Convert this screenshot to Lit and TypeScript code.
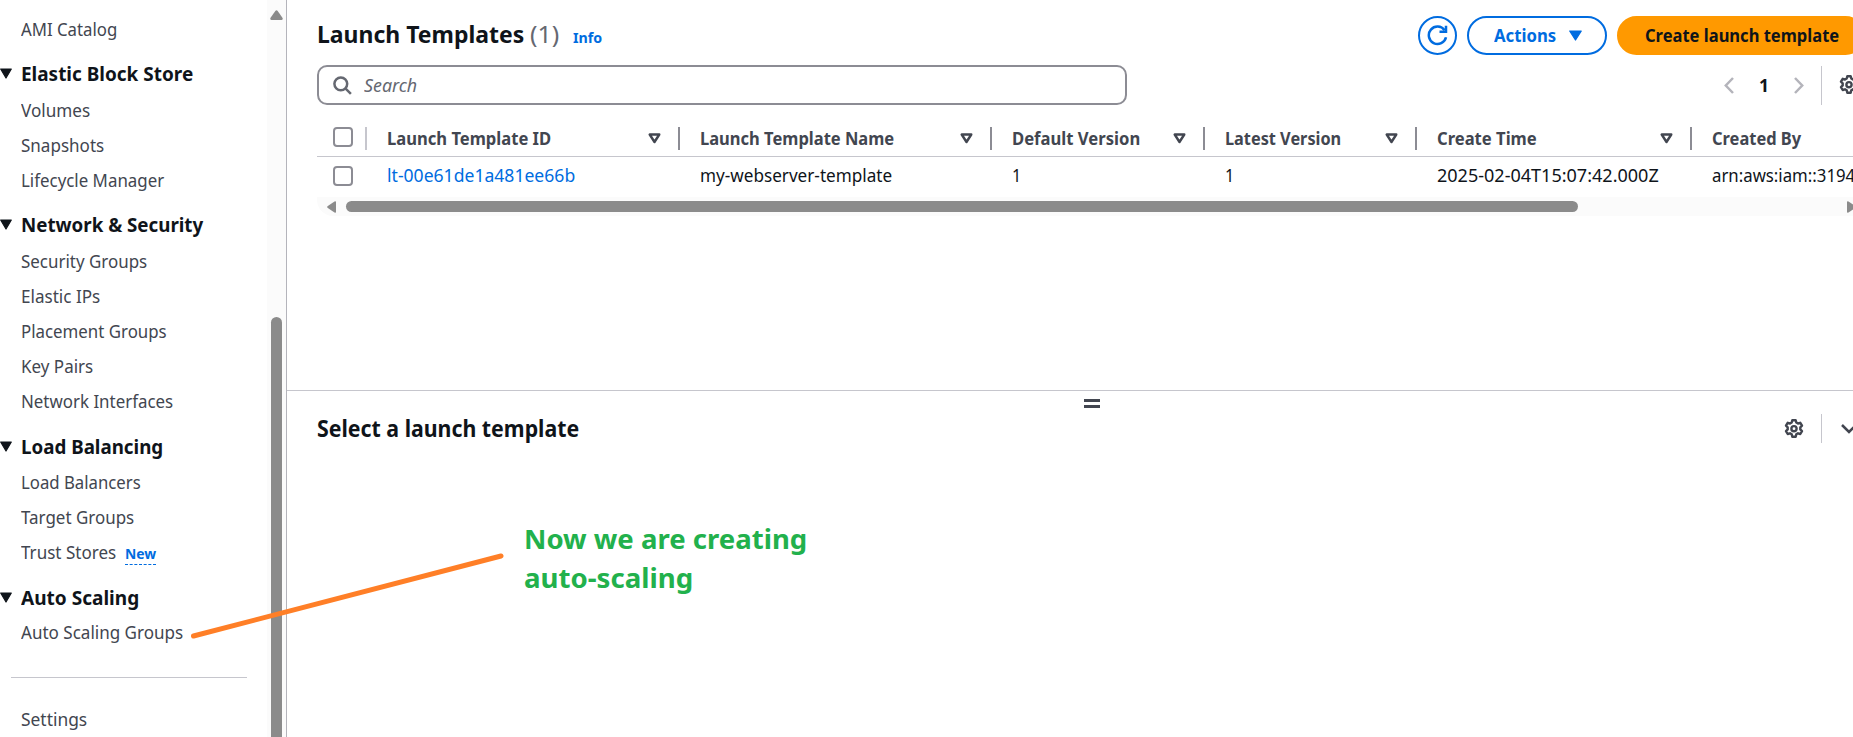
import { LitElement, html, css, svg } from "lit";
import { customElement, property } from "lit/decorators.js";

/* Single line of text condensed horizontally to a given width. */
@customElement("fit-text")
class FitText extends LitElement {
  static styles = css`
    :host { display: inline-block; white-space: nowrap; flex: none; }
    .t { display: inline-block; transform-origin: 0 50%; }
  `;
  @property({ type: Number }) w = 0;
  @property() text = "";
  render() {
    return html`<span class="t">${this.text}</span>`;
  }
  updated() {
    const t = this.renderRoot.querySelector(".t") as HTMLElement;
    const natural = t.getBoundingClientRect().width;
    if (!natural) return;
    t.style.transform = `scaleX(${(this.w + 1.2) / natural})`;
    t.style.marginRight = `${this.w + 1.2 - natural}px`;
  }
}

const t = (text: string, w: number) => html`<fit-text .text=${text} .w=${w}></fit-text>`;

const gear = svg`<path d="M8.300 1.200h3.400l.6 2.300 1.700 1 2.300-.7 1.700 2.900-1.700 1.700v2l1.700 1.700-1.700 2.900-2.300-.7-1.700 1-.6 2.500H8.300l-.6-2.500-1.700-1-2.300.7L2 12.100l1.700-1.700v-2L2 6.700l1.700-2.900 2.300.7 1.700-1z"/><circle cx="10" cy="9.700" r="2.600"/>`;

interface Section { title?: string; w?: number; items: [string, number, string?][]; }
const nav: Section[] = [
  { items: [["AMI Catalog", 95]] },
  { title: "Elastic Block Store", w: 171, items: [["Volumes", 68], ["Snapshots", 82], ["Lifecycle Manager", 142]] },
  { title: "Network & Security", w: 181, items: [["Security Groups", 125], ["Elastic IPs", 78], ["Placement Groups", 144.5], ["Key Pairs", 71], ["Network Interfaces", 151]] },
  { title: "Load Balancing", w: 141, items: [["Load Balancers", 118.5], ["Target Groups", 112], ["Trust Stores", 94, "New"]] },
  { title: "Auto Scaling", w: 117, items: [["Auto Scaling Groups", 161]] },
];

const columns: { head: string; hw: number; cell: string; cw: number; link?: boolean }[] = [
  { head: "Launch Template ID", hw: 163, cell: "lt-00e61de1a481ee66b", cw: 187, link: true },
  { head: "Launch Template Name", hw: 193, cell: "my-webserver-template", cw: 191 },
  { head: "Default Version", hw: 127, cell: "1", cw: 8 },
  { head: "Latest Version", hw: 115, cell: "1", cw: 8 },
  { head: "Create Time", hw: 98.5, cell: "2025-02-04T15:07:42.000Z", cw: 220.5 },
  { head: "Created By", hw: 88, cell: "arn:aws:iam::3194", cw: 142 },
];

@customElement("app-root")
class AppRoot extends LitElement {
  static styles = css`
    * { box-sizing: border-box; }
    :host {
      display: flex; position: relative; width: 1853px; height: 737px; overflow: hidden;
      background: #fff; color: #0f141a;
      font-family: "Noto Sans", "Open Sans", sans-serif; font-size: 17.5px;
    }
    svg { display: block; flex: none; }
    .side { width: 287px; height: 737px; display: flex; border-right: 1px solid #b4b4bb; flex: none; }
    .nav { width: 267px; padding-top: 12px; color: #424650; }
    .item { height: 35px; line-height: 35px; padding-left: 21px; display: flex; }
    .section { height: 46px; padding: 7px 0 0; line-height: 35px; display: flex; align-items: center; font-size: 19.5px; font-weight: 700; color: #0f141a; }
    .section svg { margin-right: 9px; }
    .group:nth-child(n + 4) .section { padding-top: 9px; }
    .group:nth-child(5) .section { height: 45px; }
    .new { margin-left: 9px; font-size: 15px; font-weight: 700; color: #006ce0; height: 22px; line-height: 21px; margin-top: 8px; border-bottom: 1px dashed #006ce0; width: 31px; }
    .rule { height: 1px; background: #c6c6cd; margin: 27px 20px 0 11px; }
    .settings { margin-top: 24px; }
    .vtrack { width: 19px; background: #fbfbfb; padding-top: 10px; display: flex; flex-direction: column; align-items: center; }
    .vthumb { width: 11px; margin-top: 297px; height: 440px; border-radius: 6px 6px 0 0; background: #8b8b8b; flex: none; }
    .main { flex: none; width: 1566px; height: 737px; display: flex; flex-direction: column; overflow: hidden; }
    .top { height: 390px; padding-left: 30px; flex: none; overflow: hidden; }
    .head { height: 65px; display: flex; padding-top: 16px; width: 1560px; }
    .title { width: 1101px; display: flex; align-items: baseline; height: 39px; line-height: 37px; font-size: 23.500px; font-weight: 700; }
    .count { font-weight: 400; color: #656871; margin-left: 6px; }
    .info { font-size: 15px; color: #006ce0; margin-left: 14px; }
    .btn { height: 39px; border: 2px solid #006ce0; border-radius: 20px; color: #006ce0; font-weight: 700; display: flex; align-items: center; flex: none; line-height: 34px; }
    .btn fit-text { margin-top: -1px; }
    .round { width: 39px; justify-content: center; }
    .actions { width: 140px; margin-left: 10px; padding-left: 25px; gap: 13px; }
    .create { margin-left: 10px; width: 248px; background: #f90; border-color: #f90; color: #0f141a; padding-left: 26px; }
    .tools { height: 40px; display: flex; width: 1560px; }
    .search { width: 810px; height: 40px; border: 2px solid #8c8c94; border-radius: 10px; display: flex; align-items: center; padding-left: 14px; font-style: italic; color: #656871; line-height: 34px; }
    .search fit-text { margin-left: 12px; margin-bottom: 1px; }
    .pager { margin-left: 597px; display: flex; align-items: center; font-weight: 700; }
    .one { margin: 0 25px 0 25px; }
    .vline { width: 1px; background: #c6c6cd; flex: none; }
    .pager .vline { height: 39px; margin: 0 17px 0 16.500px; }
    .row { display: grid; grid-template-columns: 50px 313px 312px 213px 212px 275px 200px; width: 1575px; align-items: center; }
    .hrow { height: 52px; padding-top: 15px; border-bottom: 1px solid #c6c6cd; color: #424650; font-weight: 700; }
    .drow { height: 39px; }
    .cell { display: flex; align-items: center; padding-left: 20px; height: 24px; line-height: 24px; }
    .drow .cell { padding-bottom: 2px; height: 24px; margin-top: -2px; }
    .hrow .cell { justify-content: space-between; padding-right: 17px; border-right: 2px solid #8c8c94; height: 23px; }
    .hrow .cell:last-child { border: 0; }
    .pick { padding-left: 16px; height: 23px; display: flex; align-items: center; }
    .hrow .pick { border-right: 2px solid #c6c6cd; }
    .box { width: 20px; height: 20px; border: 2px solid #8c8c94; border-radius: 4px; }
    .hrow .box { margin-top: -2px; }
    .drow .box { margin-top: -1px; }
    .link { color: #006ce0; }
    .htrack { height: 19px; background: #fbfbfb; border-radius: 0 0 0 16px; margin-top: 1px; display: flex; align-items: center; padding-left: 10px; width: 1536px; }
    .hthumb { width: 1232px; height: 11px; border-radius: 6px; background: #8b8b8b; margin: 0 269px 0 10px; flex: none; }
    .split { flex: 1; border-top: 1px solid #c6c6cd; padding-left: 30px; }
    .grip { width: 16px; height: 9px; border: solid #424650; border-width: 3px 0; margin: 8px 0 0 767px; }
    .panel { display: flex; height: 29px; margin-top: 6px; align-items: center; font-size: 23.500px; font-weight: 700; line-height: 29px; }
    .panel .gear { margin-left: 1204.500px; }
    .panel .vline { height: 29px; margin: 0 19px 0 17px; }
    .arrow { position: absolute; left: 0; top: 0; }
    .note { position: absolute; left: 524px; top: 519px; color: #22b14c; font-size: 27.500px; font-weight: 700; line-height: 39px; display: flex; flex-direction: column; }
  `;

  tri(fill: string, w = 12) {
    return html`<svg width=${w} height="11" viewBox="0 0 12 11" preserveAspectRatio="none"><path d="M.7 1h10.600L6 10z" fill=${fill} stroke=${fill} stroke-width="1.200" stroke-linejoin="round"/></svg>`;
  }
  gearIcon() {
    return html`<svg class="gear" width="20" height="20" viewBox="0 0 20 20" fill="none" stroke="#424650" stroke-width="2.400" stroke-linejoin="round">${gear}</svg>`;
  }

  render() {
    return html`
      <nav class="side">
        <div class="nav">
          ${nav.map((s) => html`<div class="group">
            ${s.title ? html`<div class="section">${this.tri("#0f141a")}${t(s.title, s.w!)}</div>` : ""}
            ${s.items.map(([n, w, b]) => html`<div class="item">${t(n, w)}${b ? html`<span class="new">${t(b, 30)}</span>` : ""}</div>`)}
          </div>`)}
          <div class="rule"></div>
          <div class="item settings">${t("Settings", 65)}</div>
        </div>
        <div class="vtrack">
          <svg width="13" height="10" viewBox="0 0 13 10"><path d="M5.300 1Q6.500-.6 7.700 1L12.600 8Q13 10 11.500 10h-10Q0 10 .4 8z" fill="#8b8b8b"/></svg>
          <div class="vthumb"></div>
        </div>
      </nav>
      <main class="main">
        <section class="top">
          <div class="head">
            <div class="title">${t("Launch Templates", 206)}<span class="count">${t("(1)", 28)}</span><span class="info">${t("Info", 28)}</span></div>
            <div class="btn round"><svg width="21" height="21" viewBox="0 0 21 21" fill="none" stroke="#006ce0" stroke-width="2.500"><path d="M19 12.200A8.700 8.700 0 1 1 17.600 5.200"/><path d="M19 .8v5.900h-6.500"/></svg></div>
            <div class="btn actions">${t("Actions", 61)}${this.tri("#006ce0", 13)}</div>
            <div class="btn create">${t("Create launch template", 193)}</div>
          </div>
          <div class="tools">
            <div class="search"><svg width="19" height="19" viewBox="0 0 19 19" fill="none" stroke="#656871" stroke-width="2.500"><circle cx="7.800" cy="7.800" r="6.400"/><path d="M12.400 12.400l5.500 5.500"/></svg>${t("Search", 52)}</div>
            <div class="pager">
              <svg width="10" height="17" viewBox="0 0 10 17" fill="none" stroke="#b4b4bb" stroke-width="2.500"><path d="M9 1L1.800 8.500 9 16"/></svg>
              <span class="one">${t("1", 8.8)}</span>
              <svg width="10" height="17" viewBox="0 0 10 17" fill="none" stroke="#b4b4bb" stroke-width="2.500"><path d="M1 1l7.200 7.500L1 16"/></svg>
              <div class="vline"></div>
              ${this.gearIcon()}
            </div>
          </div>
          <div class="row hrow">
            <div class="pick"><div class="box"></div></div>
            ${columns.map((c, i) => html`<div class="cell">${t(c.head, c.hw)}${i < 5 ? html`<svg width="13" height="11" viewBox="0 0 13 11"><path d="M1.700 1.500h9.600L6.500 9z" fill="none" stroke="#424650" stroke-width="2.400" stroke-linejoin="round"/></svg>` : ""}</div>`)}
          </div>
          <div class="row drow">
            <div class="pick"><div class="box"></div></div>
            ${columns.map((c) => html`<div class="cell ${c.link ? "link" : ""}">${t(c.cell, c.cw)}</div>`)}
          </div>
          <div class="htrack">
            <svg width="9" height="12" viewBox="0 0 9 12"><path d="M9 1v10q0 1-1.500.6L.8 7Q-.5 6 .8 5L7.500.4Q9 0 9 1z" fill="#8b8b8b"/></svg>
            <div class="hthumb"></div>
            <svg width="9" height="12" viewBox="0 0 9 12"><path d="M0 1v10q0 1 1.500.6L8.200 7Q9.500 6 8.200 5L1.500.4Q0 0 0 1z" fill="#8b8b8b"/></svg>
          </div>
        </section>
        <section class="split">
          <div class="grip"></div>
          <div class="panel">
            ${t("Select a launch template", 261)}
            ${this.gearIcon()}
            <div class="vline"></div>
            <svg width="16" height="10" viewBox="0 0 16 10" fill="none" stroke="#424650" stroke-width="2.500"><path d="M1 1l7 7 7-7"/></svg>
          </div>
        </section>
      </main>
      <svg class="arrow" width="520" height="660" viewBox="0 0 520 660"><path d="M193.500 636L501 556" stroke="#ff7f27" stroke-width="5" stroke-linecap="round"/></svg>
      <div class="note">${t("Now we are creating", 282)}${t("auto-scaling", 168)}</div>
    `;
  }
}
